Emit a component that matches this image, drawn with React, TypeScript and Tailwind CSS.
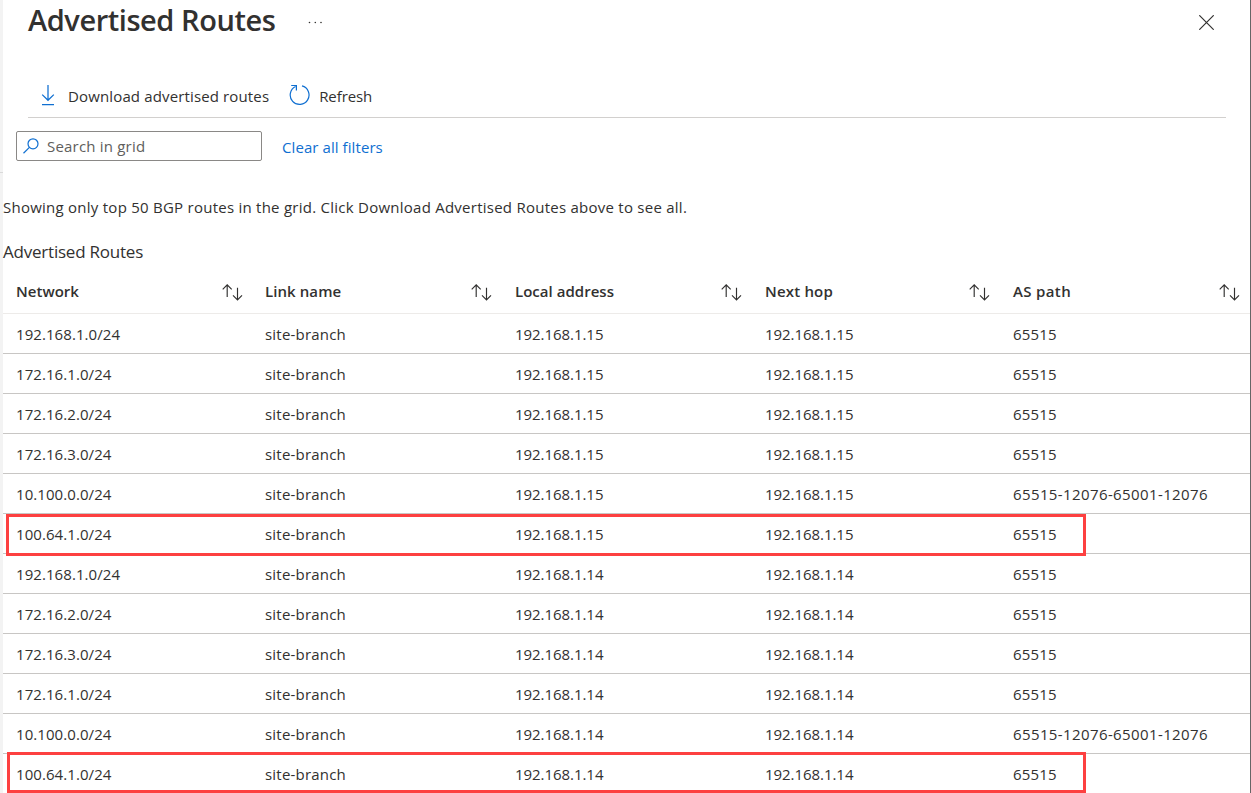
type Row = [network: string, hop: string, path: string];

const LONG_PATH = "65515-12076-65001-12076";

const rows: Row[] = [
  ["192.168.1.0/24", "192.168.1.15", "65515"],
  ["172.16.1.0/24", "192.168.1.15", "65515"],
  ["172.16.2.0/24", "192.168.1.15", "65515"],
  ["172.16.3.0/24", "192.168.1.15", "65515"],
  ["10.100.0.0/24", "192.168.1.15", LONG_PATH],
  ["100.64.1.0/24", "192.168.1.15", "65515"],
  ["192.168.1.0/24", "192.168.1.14", "65515"],
  ["172.16.2.0/24", "192.168.1.14", "65515"],
  ["172.16.3.0/24", "192.168.1.14", "65515"],
  ["172.16.1.0/24", "192.168.1.14", "65515"],
  ["10.100.0.0/24", "192.168.1.14", LONG_PATH],
  ["100.64.1.0/24", "192.168.1.14", "65515"],
];

const headers = [
  { label: "Network", tracking: "tracking-[0.02px]" },
  { label: "Link name", tracking: "tracking-[0.08px]" },
  { label: "Local address", tracking: "tracking-[0.03px]" },
  { label: "Next hop", tracking: "tracking-[0.18px]" },
  { label: "AS path", tracking: "tracking-[0.35px]" },
];

const columns = "grid grid-cols-[249px_250px_250px_248px_250px]";

function SortIcon() {
  return (
    <svg width="21" height="17" viewBox="0 0 21 17" fill="none" stroke="#323130" strokeWidth="1.15">
      <path d="M5.2 13V0.9M0.7 5.4L5.2 0.9L9.7 5.4" />
      <path d="M15.5 3.8V15.9M11 11.4L15.5 15.9L20 11.4" />
    </svg>
  );
}

function DownloadIcon() {
  return (
    <svg width="14" height="22" viewBox="0 0 14 22" fill="none" stroke="#0f6fd1" strokeWidth="1.25">
      <path d="M7 1V16M1.2 10.6L7 16.3L12.8 10.6M1 20.5H13" />
    </svg>
  );
}

function RefreshIcon() {
  return (
    <svg width="21" height="22" viewBox="0 0 21 22" fill="none" stroke="#0f6fd1" strokeWidth="1.2">
      <path d="M13 1.9A9.4 9.4 0 1 1 6.6 2.5" />
      <path d="M2.2 1.5H7.4V6.5" />
    </svg>
  );
}

function SearchIcon() {
  return (
    <svg width="16" height="16" viewBox="0 0 16 16" fill="none" stroke="#0f6fd1" strokeWidth="1.2">
      <circle cx="10" cy="5.8" r="5" />
      <path d="M6.4 9.4L0.5 15.2" />
    </svg>
  );
}

export default function App() {
  return (
    <div className="flex h-[793px] w-[1251px] overflow-hidden bg-white font-['Open_Sans','Noto_Sans',sans-serif] text-[15px] leading-5 text-[#323130]">
      <div className="w-[3px] shrink-0 bg-[#f3f3f3] pt-[172px]">
        <div className="h-px bg-[#dadada]" />
      </div>
      <main className="flex min-w-0 flex-1 flex-col border-r border-[#666] *:shrink-0">
        <header className="flex h-10 items-start justify-between pr-[36px] pl-[25px]">
          <div className="flex items-start">
            <h1 className="w-[280px] text-[29px] leading-[40px] font-semibold tracking-[-0.44px]">Advertised Routes</h1>
            <svg className="mt-[21px]" width="14" height="3" viewBox="0 0 14 3" fill="#323130">
              <circle cx="1.5" cy="1.5" r="0.8" />
              <circle cx="7.3" cy="1.5" r="0.8" />
              <circle cx="13" cy="1.5" r="0.8" />
            </svg>
          </div>
          <svg className="mt-[15px]" width="15" height="15" viewBox="0 0 15 15" fill="none" stroke="#323130" strokeWidth="1.2">
            <path d="M0.3 0.3L14.7 14.7M14.7 0.3L0.3 14.7" />
          </svg>
        </header>

        <div className="mt-[34px] mr-[24px] ml-[25px] flex h-[44px] items-start border-b border-[#d2d0ce] pt-[10px] pl-[13px]">
          <button className="flex items-start gap-[13px] tracking-[0.14px]">
            <DownloadIcon />
            <span className="pt-[2px]">Download advertised routes</span>
          </button>
          <button className="ml-[20px] flex items-start gap-[9px] tracking-[-0.1px]">
            <RefreshIcon />
            <span className="pt-[2px]">Refresh</span>
          </button>
        </div>

        <div className="mt-[13px] ml-[13px] flex h-[30px] items-center">
          <div className="flex h-[30px] w-[246px] items-center gap-[8px] rounded-[2px] border border-[#8a8886] pl-[6px] tracking-[0.2px] text-[#605e5c]">
            <SearchIcon />
            Search in grid
          </div>
          <a className="ml-[20px] pt-[2px] tracking-[0.08px] text-[#0f6fd1]">Clear all filters</a>
        </div>

        <p className="mt-[36px] tracking-[0.25px]">
          Showing only top 50 BGP routes in the grid. Click Download Advertised Routes above to see all.
        </p>
        <h2 className="mt-[23px] h-[24px] text-[17px] leading-[24px] tracking-[-0.22px]">Advertised Routes</h2>

        <section>
          <div className={`${columns} h-[50px] border-b border-[#edebe9] pl-[13px]`}>
            {headers.map((h) => (
              <div key={h.label} className="flex items-start justify-between pt-[17px] pr-[23px] font-semibold first:pr-[22px]">
                <span className={h.tracking}>{h.label}</span>
                <span className="pt-[3px]">
                  <SortIcon />
                </span>
              </div>
            ))}
          </div>
          {rows.map(([network, hop, path], i) => (
            <div key={i} className={`${columns} relative h-10 items-center border-b border-[#c8c6c4] pt-[1px] pl-[13px]`}>
              <span className="tracking-[0.07px]">{network}</span>
              <span className="tracking-[0.2px]">site-branch</span>
              <span className="tracking-[-0.05px]">{hop}</span>
              <span className="tracking-[-0.05px]">{hop}</span>
              <span className={path === LONG_PATH ? "tracking-[0.39px]" : "tracking-[0.2px]"}>{path}</span>
              {i === 5 && <div className="absolute top-0 left-[3px] h-[42px] w-[1080px] border-3 border-[#fd4040]" />}
              {i === 11 && <div className="absolute top-[-2px] left-1 h-[41px] w-[1079px] border-3 border-[#fd4040]" />}
            </div>
          ))}
        </section>
      </main>
    </div>
  );
}
